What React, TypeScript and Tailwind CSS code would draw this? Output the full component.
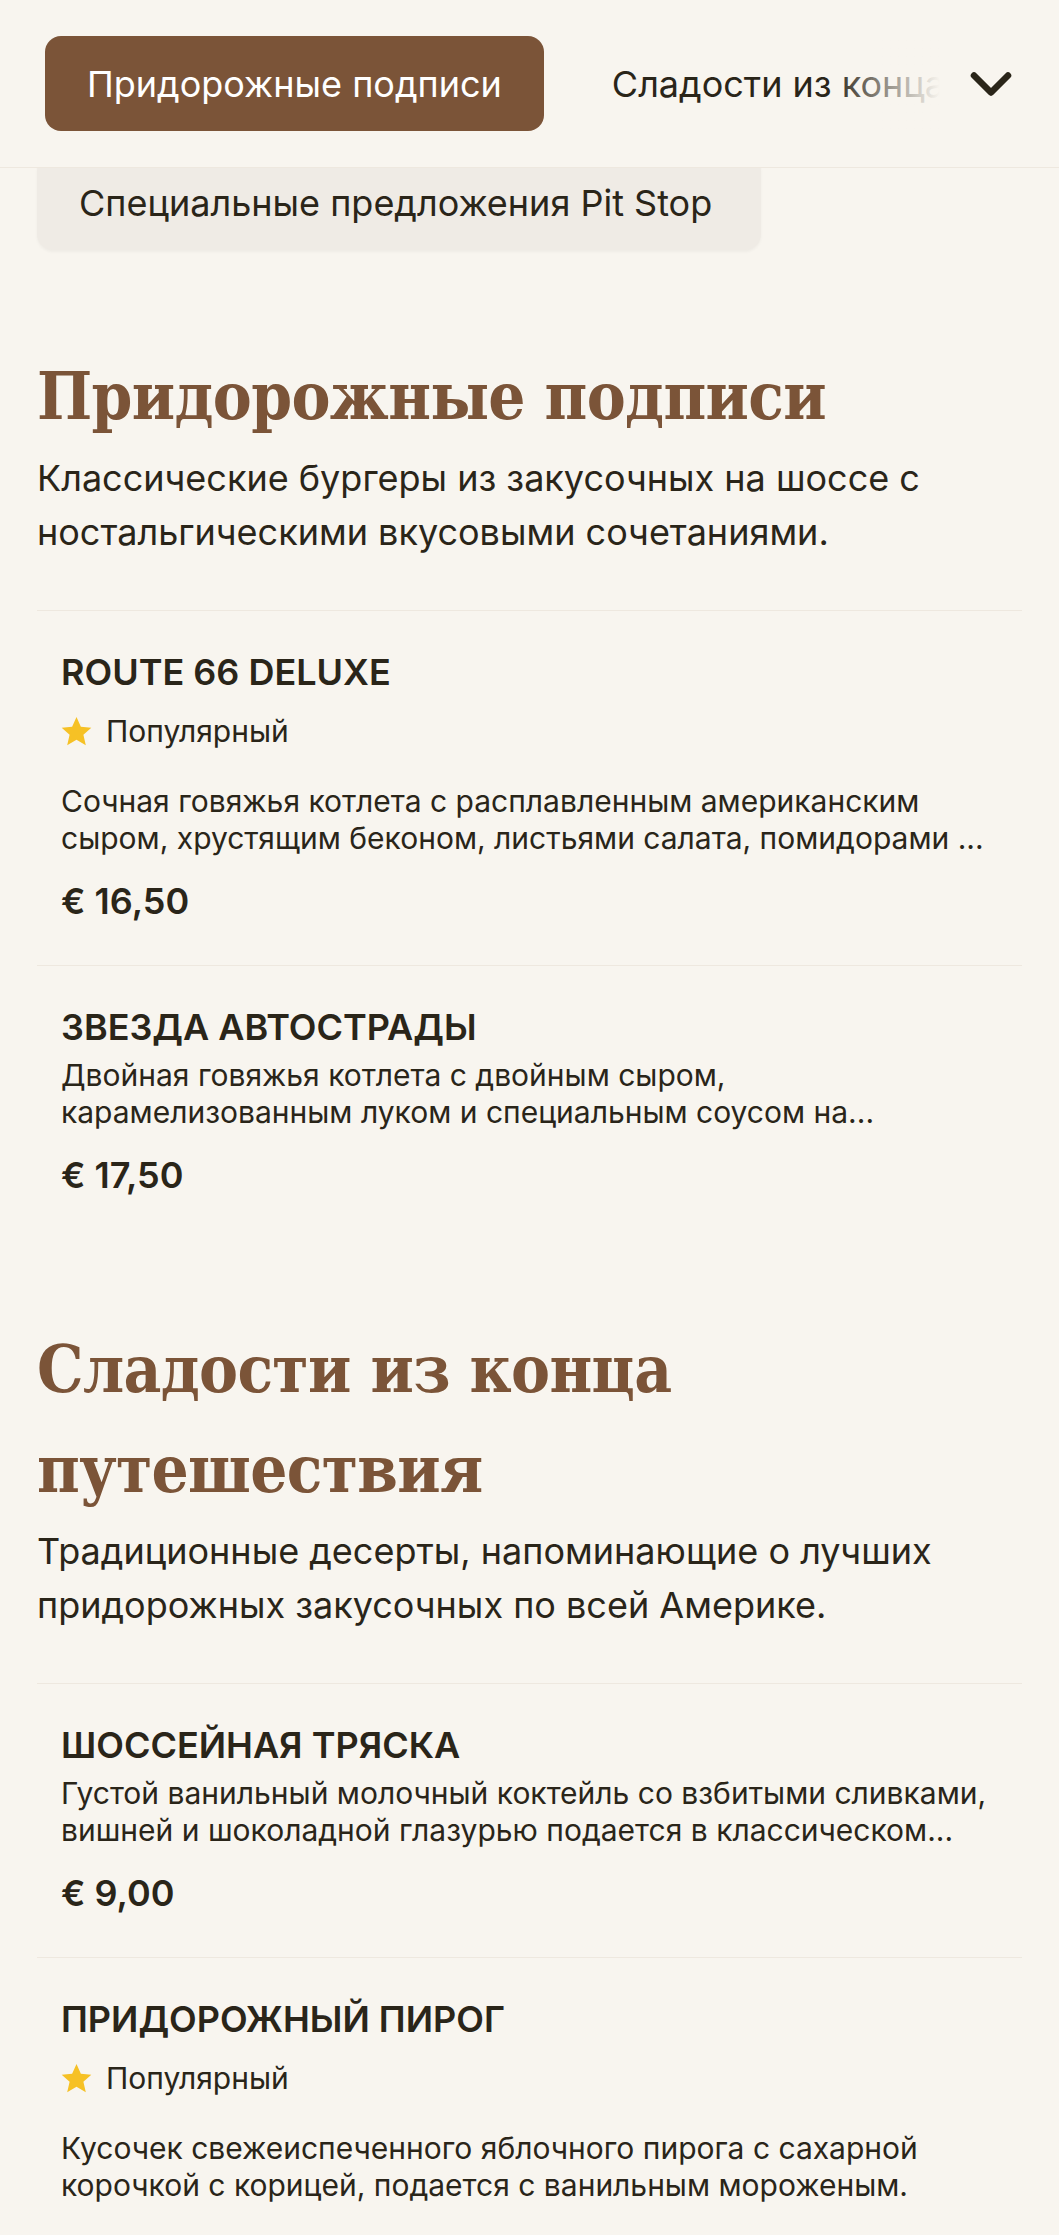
import { ChevronDown } from 'lucide-react';

interface MenuItem {
  name: string;
  description: string;
  price: string;
  popular?: boolean;
}

interface MenuSection {
  title: string;
  description: string;
  items: MenuItem[];
}

const SECTIONS: MenuSection[] = [
  {
    title: 'Придорожные подписи',
    description: 'Классические бургеры из закусочных на шоссе с ностальгическими вкусовыми сочетаниями.',
    items: [
      {
        name: 'Route 66 Deluxe',
        description:
          'Сочная говяжья котлета с расплавленным американским сыром, хрустящим беконом, листьями салата, помидорами ...',
        price: '€ 16,50',
        popular: true,
      },
      {
        name: 'Звезда автострады',
        description: 'Двойная говяжья котлета с двойным сыром, карамелизованным луком и специальным соусом на...',
        price: '€ 17,50',
      },
    ],
  },
  {
    title: 'Сладости из конца путешествия',
    description: 'Традиционные десерты, напоминающие о лучших придорожных закусочных по всей Америке.',
    items: [
      {
        name: 'Шоссейная тряска',
        description:
          'Густой ванильный молочный коктейль со взбитыми сливками, вишней и шоколадной глазурью подается в классическом...',
        price: '€ 9,00',
      },
      {
        name: 'Придорожный пирог',
        description: 'Кусочек свежеиспеченного яблочного пирога с сахарной корочкой с корицей, подается с ванильным мороженым.',
        price: '€ 6,50',
        popular: true,
      },
    ],
  },
];

function Star() {
  return (
    <svg width="31" height="30" viewBox="1 1.2 22 21" className="shrink-0">
      <path
        d="M12 1.8l3.1 6.9 7.4.7-5.6 5 1.7 7.4L12 17.9l-6.6 3.9 1.7-7.4-5.6-5 7.4-.7z"
        fill="#f6c125"
      />
    </svg>
  );
}

function Item({ item }: { item: MenuItem }) {
  return (
    <div className="border-t border-[#eee8df] pl-[24px] pt-[38px] pb-[41px]">
      <h3 className="text-[36px] font-semibold uppercase leading-[46px] text-[#2a2519]">{item.name}</h3>
      {item.popular && (
        <div className="mt-[16px] flex h-[40px] items-center gap-[14px] text-[30px] text-[#2a2519]">
          <Star />
          Популярный
        </div>
      )}
      <p className={`${item.popular ? 'mt-[32px]' : 'mt-[7px]'} pr-[20px] text-[30px] leading-[37px] text-[#2a2519]`}>
        {item.description}
      </p>
      <div className="mt-[21px] text-[36px] font-semibold leading-[46px] text-[#2a2519]">{item.price}</div>
    </div>
  );
}

export default function App() {
  return (
    <div className="min-h-screen bg-[#f8f5ef] font-['Inter',sans-serif] text-[#2a2519]">
      <nav className="sticky top-0 z-10 flex h-[168px] items-center border-b border-[#eee8df] bg-[#f8f5ef]">
        <div className="relative flex-1 overflow-hidden pl-[45px]">
          <div className="flex items-center gap-[26px] whitespace-nowrap">
            <button className="h-[95px] rounded-[16px] bg-[#7b5438] px-[42px] text-[36px] text-white">
              Придорожные подписи
            </button>
            <button className="h-[95px] px-[42px] text-[36px] text-[#2a2519]">Сладости из конца путешествия</button>
            <button className="h-[95px] px-[42px] text-[36px] text-[#2a2519]">Специальные предложения Pit Stop</button>
          </div>
          <div className="absolute right-0 top-0 h-full w-[110px] bg-linear-to-r from-[#f8f5ef00] to-[#f8f5ef]" />
        </div>
        <div className="flex w-[119px] justify-center pr-[18px]">
          <ChevronDown size={68} strokeWidth={2.3} className="text-[#2a2519]" />
        </div>
      </nav>

      <main className="px-[37px]">
        <div className="-mt-[13px] flex h-[95px] w-[724px] items-center rounded-[16px] bg-[#efebe5] pl-[42px] text-[36px] text-[#2a2519] shadow-[0_2px_3px_rgba(0,0,0,0.04)]">
          Специальные предложения Pit Stop
        </div>

        {SECTIONS.map((s, i) => (
          <section key={i} className={i === 0 ? 'mt-[96px]' : 'mt-[80px]'}>
            <h2 className="font-['DejaVu_Serif',serif] text-[65px] font-bold leading-[100px] tracking-[-0.01em] text-[#7b5438] [font-stretch:condensed]">
              {s.title}
            </h2>
            <p className="mt-[5px] text-[36px] leading-[54px] text-[#2a2519]">{s.description}</p>
            <div className="mt-[51px]">
              {s.items.map((item, j) => (
                <Item key={j} item={item} />
              ))}
            </div>
          </section>
        ))}
      </main>
    </div>
  );
}
